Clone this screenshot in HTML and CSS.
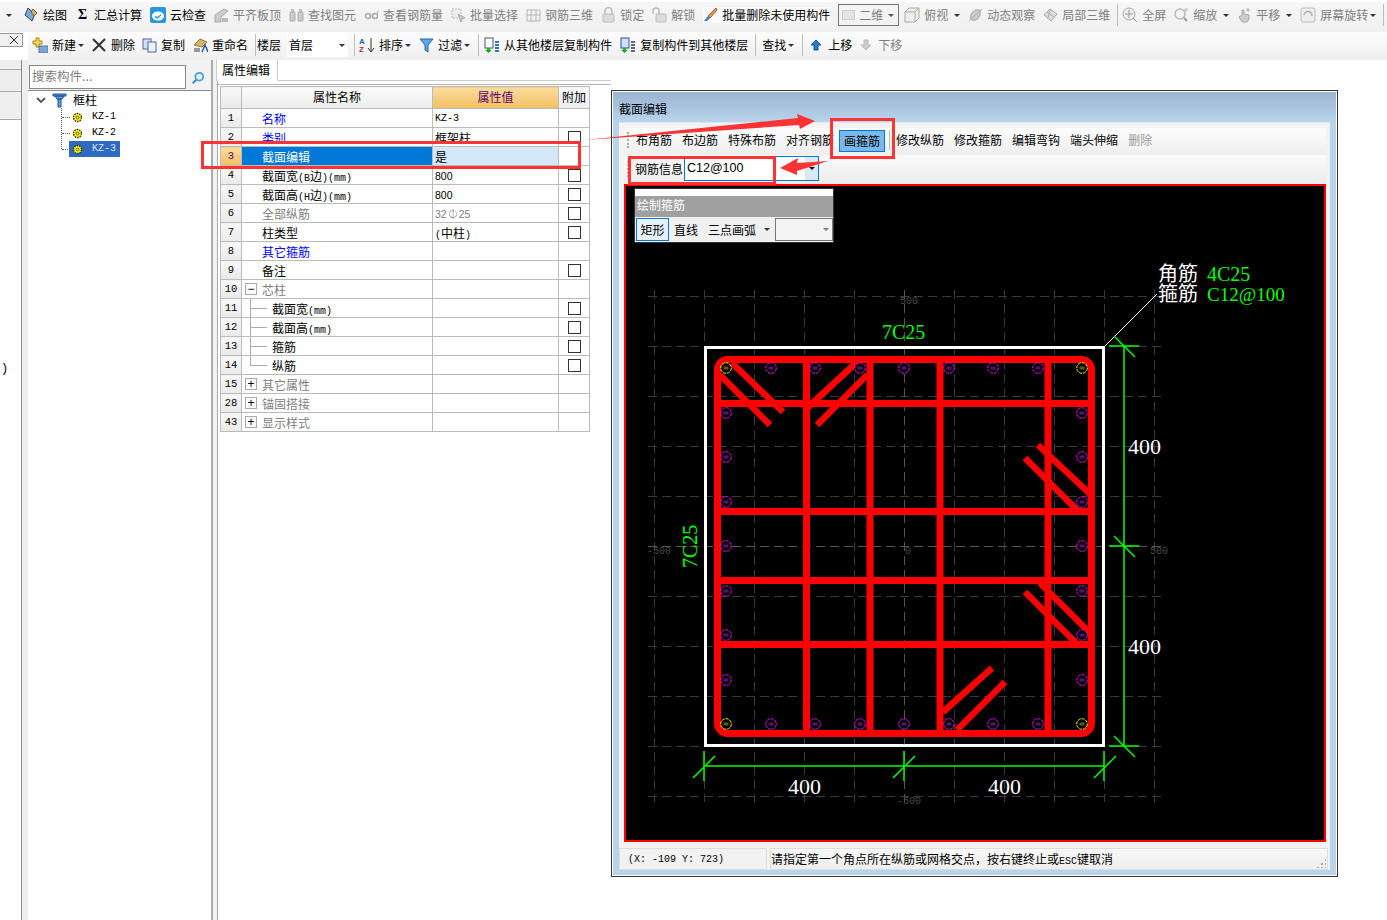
FILE: index.html
```html
<!DOCTYPE html>
<html lang="zh">
<head>
<meta charset="utf-8">
<title>截面编辑</title>
<link rel="stylesheet" href="styles.css">
</head>
<body>
<div class="tb tb1">
  <div class="tb1-start"><i class="caret"></i></div>
  <div class="it"><svg class="ic w16" viewBox="0 0 16 16"><path d="M5 1l7 6-3 7-7-6z" fill="#7fa7d8" stroke="#345"/><path d="M10 2l4 4-3 3-3-4z" fill="#d9b45b" stroke="#754"/></svg>绘图</div>
  <div class="it"><span class="ic sigma">Σ</span>汇总计算</div>
  <div class="it"><svg class="ic w16" viewBox="0 0 16 16"><rect width="16" height="16" rx="2" fill="#2b96e0"/><ellipse cx="8" cy="9" rx="6" ry="4.5" fill="#fff"/><path d="M5 9l2 2 4-3" fill="none" stroke="#2b96e0" stroke-width="1.5"/></svg>云检查</div>
  <div class="it off"><svg class="ic" viewBox="0 0 15 16"><path d="M1 8l9-6 4 2-7 6v5H1z" fill="#ccc" stroke="#aaa"/><path d="M8 15V11h6v4z" fill="#bbb"/></svg>平齐板顶</div>
  <div class="it off"><svg class="ic" viewBox="0 0 15 16"><rect x="1" y="5" width="5" height="9" rx="1" fill="#ccc" stroke="#aaa"/><rect x="9" y="5" width="5" height="9" rx="1" fill="#ccc" stroke="#aaa"/><rect x="2" y="2" width="3" height="3" fill="#bbb"/><rect x="10" y="2" width="3" height="3" fill="#bbb"/></svg>查找图元</div>
  <div class="it off"><svg class="ic" viewBox="0 0 15 16"><circle cx="4" cy="9" r="2.5" fill="none" stroke="#aaa" stroke-width="1.4"/><circle cx="11" cy="9" r="2.5" fill="none" stroke="#aaa" stroke-width="1.4"/><path d="M6 9h3M13 8l1-4" stroke="#aaa" fill="none"/></svg>查看钢筋量</div>
  <div class="it off"><svg class="ic" viewBox="0 0 15 16"><path d="M1 2h9v9H1z" fill="#eee" stroke="#bbb" stroke-dasharray="2 1"/><path d="M7 7l7 4-3 1-1 3z" fill="#ccc" stroke="#aaa"/></svg>批量选择</div>
  <div class="it off"><svg class="ic" viewBox="0 0 15 16"><path d="M1 3h13v11H1zM5 3v11M10 3v11M1 8h13" fill="none" stroke="#b5b5b5"/></svg>钢筋三维</div>
  <div class="it off"><svg class="ic" viewBox="0 0 15 16"><path d="M4 7V4a3.500 3.500 0 017 0v3" fill="none" stroke="#bbb" stroke-width="1.500"/><rect x="2" y="7" width="11" height="8" rx="1" fill="#ddd" stroke="#bbb"/></svg>锁定</div>
  <div class="it off"><svg class="ic" viewBox="0 0 15 16"><path d="M1 7V4a3 3 0 016 0v3" fill="none" stroke="#bbb" stroke-width="1.500"/><rect x="4" y="7" width="10" height="8" rx="1" fill="#ddd" stroke="#bbb"/></svg>解锁</div>
  <div class="it it-hi"><svg class="ic" viewBox="0 0 15 16"><path d="M13 1l1 2-7 8-2-2z" fill="#e8a33b" stroke="#955"/><path d="M5 9l2 2-3 3H1z" fill="#3c78d8"/></svg>批量删除未使用构件</div>
  <div class="combo combo-2d off"><span class="combo-swatch"></span>二维<i class="caret combo-caret"></i></div>
  <div class="it off after-combo"><svg class="ic w16" viewBox="0 0 16 16"><path d="M1 5h10v10H1zM1 5l4-4h10v10l-4 4M11 5l4-4" fill="#eee" stroke="#aaa"/></svg>俯视<i class="caret caret-m"></i></div>
  <div class="it off"><svg class="ic" viewBox="0 0 15 16"><ellipse cx="7.500" cy="8" rx="4" ry="6" transform="rotate(40 7.500 8)" fill="#ccc" stroke="#aaa"/><path d="M1 14L14 2" stroke="#aaa"/></svg>动态观察</div>
  <div class="it off"><svg class="ic" viewBox="0 0 15 16"><path d="M1 8l6-6 7 5-6 7z" fill="#ddd" stroke="#aaa"/><path d="M4 5l7 5M7 3L5 11" stroke="#aaa"/></svg>局部三维</div>
  <span class="sep sep-a"></span>
  <div class="it off"><svg class="ic w16" viewBox="0 0 16 16"><circle cx="7" cy="7" r="6" fill="#eee" stroke="#aaa"/><path d="M7 3v8M3 7h8M11 11l4 4" stroke="#999" fill="none"/></svg>全屏</div>
  <div class="it off"><svg class="ic" viewBox="0 0 15 16"><circle cx="6" cy="7" r="5" fill="#f2f2f2" stroke="#bbb" stroke-width="1.500"/><path d="M10 11l3 3" stroke="#999" stroke-width="2"/><path d="M10 3h4M12 1v4" stroke="#bbb"/></svg>缩放<i class="caret caret-m"></i></div>
  <div class="it off"><svg class="ic" viewBox="0 0 15 16"><path d="M2 10l3-2V3l2 0v4l5 1v4l-2 3H5z" fill="#ccc" stroke="#aaa"/><path d="M11 1v4M9 3h4" stroke="#aaa"/></svg>平移<i class="caret caret-m"></i></div>
  <div class="it off"><svg class="ic w16" viewBox="0 0 16 16"><rect x="1" y="1" width="14" height="14" rx="2" fill="#eee" stroke="#bbb"/><path d="M4 8a4 4 0 118 1" fill="none" stroke="#aaa" stroke-width="1.300"/></svg>屏幕旋转<i class="caret caret-s"></i></div>
  <span class="sep sep-end"></span>
</div>

<div class="row2">
  <div class="close-cell"><span class="close-x"><svg class="close-ic" viewBox="0 0 8 8"><path d="M0 0l8 8M8 0L0 8" stroke="#333"/></svg></span></div>
  <div class="tb tb2">
    <div class="it"><svg class="ic w16" viewBox="0 0 16 16"><path d="M4 1v3H1v3h3v3h3V7h3V4H7V1z" fill="#f4d35e" stroke="#a80"/><rect x="7" y="9" width="9" height="7" fill="#7aa7d8" stroke="#57a"/></svg>新建<i class="caret caret-t"></i></div>
    <div class="it it-x"><svg class="ic w14" viewBox="0 0 14 14"><path d="M1 1l12 12M13 1L1 13" stroke="#333" stroke-width="2"/></svg>删除</div>
    <div class="it"><svg class="ic" viewBox="0 0 15 16"><rect x="1" y="2" width="8" height="10" fill="#cfe0f4" stroke="#569"/><rect x="6" y="5" width="8" height="10" fill="#eaf2fb" stroke="#569"/></svg>复制</div>
    <div class="it"><svg class="ic" viewBox="0 0 15 16"><path d="M1 8l6-6 7 3-5 5z" fill="#d8b45a" stroke="#875"/><path d="M9 15l3-7 3 7" fill="none" stroke="#2a5db0" stroke-width="1.500"/><rect x="1" y="11" width="6" height="4" fill="#999"/></svg>重命名</div>
    <span class="sep sep-b"></span>
    <div class="it">楼层</div>
    <div class="combo combo-floor">首层<i class="caret combo-caret-b"></i></div>
    <span class="sep sep-c"></span>
    <div class="it"><svg class="ic w16" viewBox="0 0 16 16"><text x="0" y="7" class="az az-a">A</text><text x="0" y="15" class="az az-z">Z</text><path d="M12 1v13M9 11l3 4 3-4" fill="none" stroke="#333"/></svg>排序<i class="caret caret-t"></i></div>
    <div class="it"><svg class="ic" viewBox="0 0 15 16"><path d="M1 2h13L9 8v7l-3-2V8z" fill="#5ca7e8" stroke="#26a"/></svg>过滤<i class="caret caret-t"></i></div>
    <span class="sep sep-d"></span>
    <div class="it"><svg class="ic w16" viewBox="0 0 16 16"><rect x="1" y="1" width="8" height="10" fill="#fff" stroke="#456"/><path d="M3 11h3v2h2l-3.500 3L1 13h2z" fill="#2a2"/><path d="M11 5h4M11 8h4M11 11h4M11 14h4" stroke="#37b" stroke-width="2"/></svg>从其他楼层复制构件</div>
    <div class="it"><svg class="ic w16" viewBox="0 0 16 16"><rect x="1" y="1" width="8" height="10" fill="#cfe0f8" stroke="#25a"/><path d="M3 11h3v2h2l-3.500 3L1 13h2z" fill="#2a2"/><path d="M11 5h4M11 8h4M11 11h4M11 14h4" stroke="#667" stroke-width="2"/></svg>复制构件到其他楼层</div>
    <span class="sep sep-e"></span>
    <div class="it">查找<i class="caret caret-t"></i></div>
    <span class="sep sep-f"></span>
    <div class="it it-arrow"><svg class="ic w12" viewBox="0 0 12 12"><path d="M6 1l5 5H8v5H4V6H1z" fill="#2a7bd8" stroke="#159"/></svg>上移</div>
    <div class="it it-arrow off"><svg class="ic w12" viewBox="0 0 12 12"><path d="M6 11l5-5H8V1H4v5H1z" fill="#ccc" stroke="#bbb"/></svg>下移</div>
  </div>
</div>

<main class="main">
  <aside class="strip">
    <div class="strip-a"></div>
    <div class="strip-b"></div>
    <div class="strip-c"></div>
    <div class="strip-d"><span class="strip-paren">)</span></div>
  </aside>
  <div class="strip2"></div>
  <nav class="side">
    <div class="search-row">
      <div class="search">搜索构件...</div>
      <svg class="search-ic" viewBox="0 0 16 16"><circle cx="9.500" cy="6.500" r="4.500" fill="#e4f1fb" stroke="#4a9bdc" stroke-width="2"/><path d="M6 10l-4 4" stroke="#3b8bd0" stroke-width="2.500"/></svg>
    </div>
    <div class="tree">
      <div class="tree-root"><svg class="chev" viewBox="0 0 10 7"><path d="M1 1l4 4 4-4" fill="none" stroke="#555" stroke-width="1.800"/></svg><svg class="funnel" viewBox="0 0 15 15"><path d="M1 1h13v2H1zM3 3h9l-2 3H5zM6 6h3v8H6z" fill="#5da6e6" stroke="#1f4f8f"/></svg>框柱</div>
      <div class="tree-item"><svg class="gear" viewBox="0 0 11 11"><circle cx="5.500" cy="5.500" r="4" fill="#ff0" stroke="#222" stroke-width="1.400" stroke-dasharray="1.500 1"/><circle cx="5.500" cy="5.500" r="1.500" fill="#ff0" stroke="#553"/></svg><span class="tree-label">KZ-1</span></div>
      <div class="tree-item"><svg class="gear" viewBox="0 0 11 11"><circle cx="5.500" cy="5.500" r="4" fill="#ff0" stroke="#222" stroke-width="1.400" stroke-dasharray="1.500 1"/><circle cx="5.500" cy="5.500" r="1.500" fill="#ff0" stroke="#553"/></svg><span class="tree-label">KZ-2</span></div>
      <div class="tree-item tree-item-sel"><svg class="gear" viewBox="0 0 11 11"><circle cx="5.500" cy="5.500" r="4" fill="#ff0" stroke="#222" stroke-width="1.400" stroke-dasharray="1.500 1"/><circle cx="5.500" cy="5.500" r="1.500" fill="#ff0" stroke="#553"/></svg><span class="tree-label">KZ-3</span></div>
    </div>
  </nav>
  <div class="splitter"></div>
  <section class="content">
    <div class="tabs"><div class="tab">属性编辑</div></div>
    <div class="tab-line"></div>
    <table class="props">
      <colgroup><col class="c-n"><col class="c-name"><col class="c-val"><col class="c-add"></colgroup>
      <thead><tr><th class="n"></th><th>属性名称</th><th class="th-val">属性值</th><th>附加</th></tr></thead>
      <tbody>
        <tr><td class="n">1</td><td class="name link">名称</td><td class="val m">KZ-3</td><td></td></tr>
        <tr><td class="n">2</td><td class="name link">类别</td><td class="val">框架柱</td><td class="add"><i class="cb"></i></td></tr>
        <tr class="sel"><td class="n">3</td><td class="name">截面编辑</td><td class="val">是</td><td></td></tr>
        <tr><td class="n">4</td><td class="name">截面宽<span class="m">(B</span>边<span class="m">)(mm)</span></td><td class="val s">800</td><td class="add"><i class="cb"></i></td></tr>
        <tr><td class="n">5</td><td class="name">截面高<span class="m">(H</span>边<span class="m">)(mm)</span></td><td class="val s">800</td><td class="add"><i class="cb"></i></td></tr>
        <tr class="dim"><td class="n">6</td><td class="name">全部纵筋</td><td class="val s">32<span class="steel">⏀</span>25</td><td class="add"><i class="cb"></i></td></tr>
        <tr><td class="n">7</td><td class="name">柱类型</td><td class="val"><span class="m">(</span>中柱<span class="m">)</span></td><td class="add"><i class="cb"></i></td></tr>
        <tr><td class="n">8</td><td class="name link">其它箍筋</td><td></td><td></td></tr>
        <tr><td class="n">9</td><td class="name">备注</td><td></td><td class="add"><i class="cb"></i></td></tr>
        <tr class="dim"><td class="n">10</td><td class="name group"><i class="exp">−</i>芯柱</td><td></td><td></td></tr>
        <tr><td class="n">11</td><td class="name sub branch">截面宽<span class="m">(mm)</span></td><td></td><td class="add"><i class="cb"></i></td></tr>
        <tr><td class="n">12</td><td class="name sub branch">截面高<span class="m">(mm)</span></td><td></td><td class="add"><i class="cb"></i></td></tr>
        <tr><td class="n">13</td><td class="name sub branch">箍筋</td><td></td><td class="add"><i class="cb"></i></td></tr>
        <tr><td class="n">14</td><td class="name sub branch last">纵筋</td><td></td><td class="add"><i class="cb"></i></td></tr>
        <tr class="dim"><td class="n">15</td><td class="name group"><i class="exp">+</i>其它属性</td><td></td><td></td></tr>
        <tr class="dim"><td class="n">28</td><td class="name group"><i class="exp">+</i>锚固搭接</td><td></td><td></td></tr>
        <tr class="dim"><td class="n">43</td><td class="name group"><i class="exp">+</i>显示样式</td><td></td><td></td></tr>
      </tbody>
    </table>
  </section>
</main>

<div class="dialog">
  <div class="dlg-title">截面编辑</div>
  <div class="dlg-panel">
    <div class="dtb dtb1">
      <span class="grip"></span>
      <span class="dit">布角筋</span><span class="dit">布边筋</span><span class="dit">特殊布筋</span><span class="dit">对齐钢筋</span>
      <span class="dbtn">画箍筋</span>
      <span class="dsep"></span>
      <span class="dit">修改纵筋</span><span class="dit">修改箍筋</span><span class="dit">编辑弯钩</span><span class="dit">端头伸缩</span><span class="dit dit-off">删除</span>
    </div>
    <div class="dtb dtb2">
      <span class="grip grip-2"></span>
      <span class="rebar-label">钢筋信息</span>
      <div class="rebar-input">C12@100<span class="rebar-drop"><i class="caret caret-d"></i></span></div>
    </div>
    <div class="canvas">
      <svg class="cad" viewBox="626 186 698 654">
        <defs><g id="reb"><circle class="reb-ring" r="5.300"/><rect class="reb-core" x="-2.500" y="-1.500" width="5" height="3"/></g></defs>
        <path class="grid" d="M654 290V802M704 290V802M754 290V802M804 290V802M854 290V802M954 290V802M1004 290V802M1054 290V802M1104 290V802M1154 290V802M648 296H1162M648 346H1162M648 396H1162M648 446H1162M648 496H1162M648 596H1162M648 646H1162M648 696H1162M648 746H1162M648 796H1162"/>
        <path class="grid grid-c" d="M904 290V802M648 546H1162"/>
        <text class="lbl" x="900" y="304">500</text><text class="lbl" x="647" y="554">-500</text><text class="lbl" x="905" y="554">0</text><text class="lbl" x="1150" y="554">500</text><text class="lbl" x="897" y="804">-500</text>
        <rect class="outline" x="705.500" y="347.500" width="398" height="398"/>
        <path class="tie" d="M806.500 360V733M870 360V733M940 360V733M1048 360V733M721 403.500H1088M721 511.500H1088M721 580.500H1088M721 644.500H1088"/>
        <path class="hook" d="M720 375L770 425M732 363L783 412M805 410L857 362M817 425L867 375M1038 445L1091 495M1025 458L1077 510M1040 583L1091 634M1025 592L1077 644M992 668L943 712M1005 682L957 730"/>
        <rect class="stirrup" x="717.500" y="359.500" width="374" height="374" rx="10"/>
        <g class="rb rb-m">
          <use href="#reb" x="771" y="368"/><use href="#reb" x="815" y="368"/><use href="#reb" x="860" y="368"/><use href="#reb" x="904" y="368"/><use href="#reb" x="949" y="368"/><use href="#reb" x="993" y="368"/><use href="#reb" x="1038" y="368"/>
          <use href="#reb" x="771" y="724"/><use href="#reb" x="815" y="724"/><use href="#reb" x="860" y="724"/><use href="#reb" x="904" y="724"/><use href="#reb" x="949" y="724"/><use href="#reb" x="993" y="724"/><use href="#reb" x="1038" y="724"/>
          <use href="#reb" x="726" y="413"/><use href="#reb" x="726" y="457"/><use href="#reb" x="726" y="502"/><use href="#reb" x="726" y="546"/><use href="#reb" x="726" y="591"/><use href="#reb" x="726" y="635"/><use href="#reb" x="726" y="680"/>
          <use href="#reb" x="1082" y="413"/><use href="#reb" x="1082" y="457"/><use href="#reb" x="1082" y="502"/><use href="#reb" x="1082" y="546"/><use href="#reb" x="1082" y="591"/><use href="#reb" x="1082" y="635"/><use href="#reb" x="1082" y="680"/>
        </g>
        <g class="rb rb-y">
          <use href="#reb" x="726" y="368"/><use href="#reb" x="1082" y="368"/><use href="#reb" x="726" y="724"/><use href="#reb" x="1082" y="724"/>
        </g>
        <path class="leader" d="M1105 346L1157 294"/>
        <path class="dim-g" d="M1124 346V746M1109 346H1139M1109 546H1139M1109 746H1139M1114 336L1135 357M1114 536L1135 557M1114 736L1135 757M704 766H1104M704 751V781M904 751V781M1104 751V781M693 778L715 756M893 778L915 756M1094 778L1116 756"/>
        <text class="t-g" x="882" y="339">7C25</text>
        <text class="t-g" transform="translate(697 568) rotate(-90)">7C25</text>
        <text class="t-w" x="1128" y="454">400</text><text class="t-w" x="1128" y="654">400</text><text class="t-w" x="788" y="794">400</text><text class="t-w" x="988" y="794">400</text>
        <text class="t-cjk" x="1158" y="281">角筋</text><text class="t-cjk" x="1158" y="301">箍筋</text>
        <text class="t-g" x="1207" y="281">4C25</text><text class="t-g t-g2" x="1207" y="301">C12@100</text>
      </svg>
      <div class="float">
        <div class="float-top"></div>
        <div class="float-title">绘制箍筋</div>
        <div class="float-tools"><span class="ftool ftool-on">矩形</span><span class="ftool">直线</span><span class="ftool ftool-arc">三点画弧</span><i class="caret caret-t caret-f"></i><span class="fcombo"><i class="caret caret-g"></i></span></div>
      </div>
    </div>
    <div class="status">
      <div class="st-coord">(X: -109 Y: 723)</div>
      <div class="st-msg">请指定第一个角点所在纵筋或网格交点&#xFF0C;按右键终止或<span class="m">ESC</span>键取消<span class="st-grip"></span></div>
    </div>
  </div>
</div>

<svg class="marks" viewBox="0 0 1387 920">
  <rect class="mark" x="202.500" y="142.500" width="377" height="25"/>
  <rect class="mark" x="831.500" y="119.500" width="62" height="38"/>
  <rect class="mark" x="629.500" y="157.500" width="145" height="26"/>
  <path class="arrow" d="M585 140L798 118L797 114L815 121L800 129L799 125Z"/>
  <path class="arrow" d="M828 161L797 163L798 158L780 168L797 175L797 171Z"/>
</svg>
</body>
</html>
```
FILE: styles.css
```css
* { box-sizing: border-box; }
html, body { margin: 0; padding: 0; }
body {
  width: 1387px; height: 920px; overflow: hidden; position: relative; background: #fff; color: #000;
  font: 12px/16px "Noto Sans CJK SC", "Liberation Sans", sans-serif;
}
i { font-style: normal; }
.m { font-family: "Liberation Mono", "Noto Sans CJK SC", monospace; font-size: 10px; line-height: 0; }
.s { font-family: "Liberation Sans", sans-serif; font-size: 10.500px; }

/* toolbars */
.tb { display: flex; align-items: center; gap: 8px; white-space: nowrap; }
.tb1 { height: 32px; border-top: 2px solid #fff; background: linear-gradient(#f6f6f6, #f0f0f0); padding-bottom: 4px; }
.tb1-start { width: 15px; height: 26px; display: flex; align-items: center; padding-left: 6px; }
.row2 { display: flex; height: 28px; }
.close-cell { width: 28px; background: #fff; padding-top: 1px; }
.close-x { display: flex; justify-content: flex-end; align-items: center; width: 23px; height: 14px; border: 1px solid #999; border-left: 0; background: #f0f0f0; padding-right: 4px; }
.close-ic { width: 8px; height: 8px; }
.tb2 { flex: 1; background: linear-gradient(#fdfdfd, #efefef); padding: 0 0 2px 4px; }
.it { display: flex; align-items: center; }
.it-hi { background: #fafafa; }
.off { color: #808080; }
.ic { display: block; width: 15px; height: 16px; margin-right: 4px; flex: none; }
.w16 { width: 16px; }
.w14 { width: 14px; height: 14px; margin-right: 5px; }
.w12 { width: 12px; height: 12px; margin-right: 6px; }
.sigma { font: bold 14px/16px "Liberation Serif", serif; text-align: center; }
.az { font: bold 8px "Liberation Sans", sans-serif; }
.az-a { fill: #2a5db0; }
.az-z { fill: #b03030; }
.caret { display: inline-block; width: 0; height: 0; border: 3px solid transparent; border-top-color: #333; border-bottom: 0; }
.caret-m { margin-left: 6px; }
.caret-s { margin-left: 2px; }
.caret-t { margin-left: 2px; }
.sep { width: 1px; height: 22px; background: #bdbdbd; flex: none; }
.sep-a { margin: 0 -4px 0 -1px; }
.sep-end { margin-left: -1px; }
.sep-b { margin: 0 -7px 0 -1px; }
.sep-c { margin: 0 -4px 0 -2px; }
.sep-d { margin: 0 -3px 0 0; }
.sep-e { margin: 0 -2px 0 -1px; }
.sep-f { margin: 0 -1px 0 0; }
.combo { display: flex; align-items: center; width: 61px; flex: none; position: relative; }
.combo-2d { height: 22px; border: 1px solid #777; padding-left: 20px; }
.combo-swatch { position: absolute; left: 3px; top: 5px; width: 13px; height: 10px; background: #e4e4e4; border: 1px solid #ccc; }
.combo-caret { position: absolute; right: 4px; top: 9px; border-top-color: #555; }
.after-combo { margin-left: -3px; }
.combo-floor { height: 24px; background: #fff; padding-left: 2px; margin-left: -2px; }
.combo-caret-b { position: absolute; right: 3px; top: 11px; }
.it-x { margin-right: -1px; }

/* main area */
.main { display: flex; height: 860px; }
.strip { background: #fff; border-right: 1px solid #8a8a8a; flex: none; display: flex; flex-direction: column; width: 22px; }
.strip-a { height: 10px; background: #eee; border-bottom: 1px solid #aaa; }
.strip-b { height: 22px; background: #eee; border-bottom: 1px solid #aaa; }
.strip-c { height: 28px; background: #efefef; border-bottom: 1px solid #aaa; }
.strip-d { flex: 1; padding-top: 241px; }
.strip-paren { display: block; padding-left: 1px; font: 12px/16px "Liberation Mono", monospace; }
.strip2 { width: 6px; background: #eee; flex: none; }
.side { width: 183px; flex: none; display: flex; flex-direction: column; }
.search-row { height: 30px; display: flex; padding: 5px 0 0 1px; background: #f2f2f2; }
.search { width: 157px; height: 24px; border: 1px solid #888; background: #fff; color: #808080; line-height: 19px; padding-left: 2px; font-size: 12.500px; }
.search-ic { width: 14px; height: 14px; margin: 6px 0 0 5px; }
.tree { flex: 1; border-top: 1px solid #888; background: #fff; position: relative; }
.tree::before { content: ""; position: absolute; left: 33px; top: 17px; height: 41px; border-left: 1px dotted #555; }
.tree-root { display: flex; align-items: center; height: 18px; padding-left: 8px; }
.chev { width: 10px; height: 7px; margin-right: 6px; }
.funnel { width: 15px; height: 15px; margin-right: 6px; }
.tree-item { display: flex; align-items: center; height: 16px; margin-left: 41px; width: 51px; padding-left: 3px; position: relative; }
.tree-item::before { content: ""; position: absolute; left: -7px; top: 8px; width: 8px; border-top: 1px dotted #555; }
.tree-item-sel { background: #2f6ac0; color: #fff; }
.gear { width: 11px; height: 11px; margin-right: 9px; }
.tree-label { font: 10px/14px "Liberation Mono", monospace; }
.tree-item-sel .tree-label { color: #d8e6fa; }
.splitter { width: 7px; flex: none; background: linear-gradient(90deg, #aaa 2px, #f2f2f2 2px); border-right: 1px solid #aaa; }
.content { flex: 1; }
.tabs { height: 20px; display: flex; }
.tab { width: 62px; height: 21px; background: #fff; border-right: 1px solid #ccc; padding-left: 5px; line-height: 20px; position: relative; border-left: 1px solid #ccc; margin-left: -2px; }
.tab-line { height: 5px; border-top: 1px solid #ccc; border-bottom: 1px solid #b5b5b5; margin-left: -2px; width: 395px; margin-bottom: 1px; }

/* property grid */
.props { width: 369px; margin-left: 2px; border-collapse: collapse; table-layout: fixed; border: 1px solid #bbb; }
.c-n { width: 21px; }
.c-name { width: 191px; }
.c-val { width: 126px; }
.c-add { width: 31px; }
.props th, .props td { border: 1px solid #bbb; height: 19px; padding: 0; font-weight: 400; line-height: 16px; overflow: hidden; white-space: nowrap; }
.props th { height: 22px; padding-bottom: 2px; background: linear-gradient(#fcfcfc, #ececec); text-align: center; }
.props .th-val { background: linear-gradient(#fbdca0, #f2c060); color: #60006b; }
.props .n { background: linear-gradient(#f8f8f8, #e9e9e9); color: #000; text-align: center; font-family: "Liberation Mono", monospace; font-size: 10.500px; }
.props .name, .props .val { padding-top: 1px; }
.name { padding-left: 20px !important; position: relative; }
.link { color: #00f; }
.val { padding-left: 2px !important; }
.add { text-align: center; line-height: 0 !important; }
.cb { display: inline-block; width: 13px; height: 13px; border: 1px solid #333; background: #fff; vertical-align: top; margin: 1px 0 0 0; }
.dim { color: #808080; }
.steel { font-size: 10px; color: #444; margin: 0 1px; line-height: 0; }
.props .sel .n { background: linear-gradient(#fbdca0, #f2c060); color: #60006b; }
.sel .name { background: #0078d7; color: #fff; }
.sel .val { background: #d5e8f8; }
.group { padding-left: 20px !important; }
.exp { position: absolute; left: 3px; top: 3px; width: 12px; height: 12px; border: 1px solid #aaa; color: #000; font: 12px/10px "Liberation Sans", sans-serif; text-align: center; background: #fff; }
.sub { padding-left: 30px !important; }
.branch::before { content: ""; position: absolute; left: 8px; top: -1px; height: 20px; border-left: 1px solid #aaa; }
.branch::after { content: ""; position: absolute; left: 8px; top: 9px; width: 17px; border-top: 1px solid #aaa; }
.last::before { height: 10px; }

/* dialog window */
.dialog { position: absolute; left: 611px; top: 90px; width: 727px; height: 787px; border: 1px solid #333; box-shadow: inset 0 0 0 1px #fff; background: linear-gradient(#9ab3d0, #b8d3ec 30px); padding: 1px 7px 6px 7px; display: flex; flex-direction: column; }
.dlg-title { height: 30px; line-height: 34px; flex: none; }
.dlg-panel { flex: 1; background: #f3f3f3; padding: 5px 4px 0 5px; display: flex; flex-direction: column; border-top: 1px solid #dfe8f2; }
.dtb { display: flex; align-items: center; flex: none; white-space: nowrap; }
.dtb1 { height: 27px; gap: 10px; background: linear-gradient(#fdfdfd, #eee); padding-bottom: 4px; }
.grip { width: 2px; height: 16px; margin: 0 0 0 3px; border-left: 2px dotted #aaa; flex: none; }
.dtb1 .grip { margin-right: -3px; }
.dtb1 .dbtn { margin-left: -5px; margin-top: 3px; }
.dbtn { width: 46px; height: 22px; background: #7ab8ea; border: 1px solid #0078d7; line-height: 20px; text-align: center; }
.dsep { width: 1px; height: 20px; background: #bbb; margin: 0 -4px 0 -6px; }
.dit-off { color: #999; }
.dtb2 { height: 29px; padding: 1px 0 3px; background: linear-gradient(#fafafa, #ececec); }
.grip-2 { margin-right: 6px; }
.rebar-label { width: 49px; flex: none; }
.rebar-input { width: 135px; height: 25px; background: #fff; border: 1px solid #0078d7; position: relative; font: 12.500px/22px "Liberation Sans", sans-serif; padding-left: 2px; }
.rebar-drop { position: absolute; right: 0; top: 0; bottom: 0; width: 13px; background: #d8e8f5; display: flex; align-items: center; justify-content: center; }
.caret-d { border-top-color: #111; }
.canvas { height: 658px; width: 702px; flex: none; background: #000; border: 2px solid #f00; position: relative; }
.cad { display: block; width: 698px; height: 654px; }
.grid { fill: none; stroke: #3a3a3a; stroke-width: 1; stroke-dasharray: 9 5; shape-rendering: crispEdges; }
.grid-c { stroke: #555; }
.lbl { fill: #4a4a4a; font: 10px "Liberation Mono", monospace; }
.outline { fill: none; stroke: #fff; stroke-width: 3; }
.rb-m { stroke: #f0f; color: #4a1a6a; }
.rb-y { stroke: #ff0; color: #5a5a10; }
.reb-ring { fill: #000; stroke-width: 1; stroke-dasharray: 3 1; }
.reb-core { fill: currentColor; stroke: none; }
.tie { fill: none; stroke: #f00; stroke-width: 7; }
.hook { fill: none; stroke: #f00; stroke-width: 6.500; }
.stirrup { fill: none; stroke: #f00; stroke-width: 7; }
.leader { fill: none; stroke: #fff; stroke-width: 1; shape-rendering: crispEdges; }
.dim-g { fill: none; stroke: #0f0; stroke-width: 1.500; }
.t-g { fill: #0f0; font: 20px "Liberation Serif", serif; }
.t-g2 { font-size: 19px; }
.t-w { fill: #fff; font: 22px "Liberation Serif", serif; }
.t-cjk { fill: #fff; font: 20px "Noto Sans CJK SC", sans-serif; }
.float { position: absolute; left: 8px; top: 2px; width: 200px; height: 55px; background: #f0f0f0; border: 1px solid #333; display: flex; flex-direction: column; }
.float-top { height: 7px; background: #fff; flex: none; }
.float-title { height: 21px; background: #a0a0a0; color: #fff; line-height: 18px; padding-left: 2px; flex: none; }
.float-tools { flex: 1; display: flex; align-items: center; padding-left: 1px; gap: 5px; white-space: nowrap; }
.ftool-on { width: 33px; height: 23px; border: 1px solid #0078d7; background: #e6f0fa; text-align: center; line-height: 21px; }
.ftool { flex: none; }
.ftool-arc { margin-left: 5px; }
.caret-f { margin-left: 3px; }
.fcombo { width: 58px; height: 23px; border: 1px solid #777; background: #f4f4f4; position: relative; }
.caret-g { position: absolute; right: 3px; top: 9px; border-top-color: #777; }
.status { height: 22px; margin-top: 6px; display: flex; gap: 3px; flex: none; margin-left: -5px; margin-right: -2px; }
.st-coord { width: 148px; flex: none; background: #f2f2f2; border: 1px solid #ddd; font: 10px/21px "Liberation Mono", monospace; padding-left: 8px; }
.st-msg { flex: 1; background: linear-gradient(#f8f8f8, #eee); border: 1px solid #ddd; line-height: 20px; padding-left: 0; white-space: nowrap; position: relative; }
.st-grip { position: absolute; right: 1px; bottom: 1px; width: 10px; height: 10px; background: radial-gradient(circle, #aaa 1px, transparent 1.200px) 0 0 / 4px 4px; clip-path: polygon(100% 0, 100% 100%, 0 100%); }

/* red annotations drawn on top of the screenshot */
.marks { position: absolute; left: 0; top: 0; width: 1387px; height: 920px; pointer-events: none; }
.mark { fill: none; stroke: #f33; stroke-width: 3; }
.arrow { fill: #f33; }
```
